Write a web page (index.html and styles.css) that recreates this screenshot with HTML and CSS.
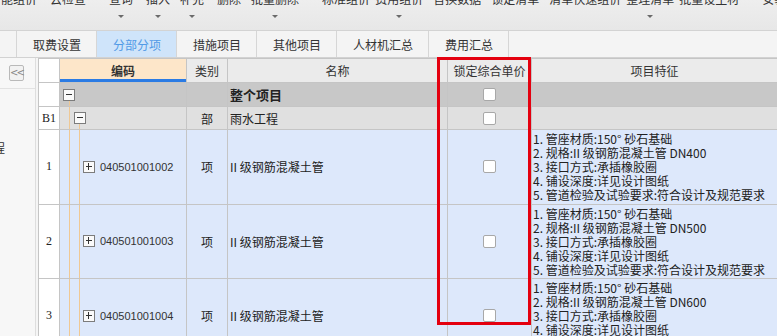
FILE: index.html
```html
<!DOCTYPE html>
<html lang="zh-CN">
  <head>
    <meta charset="UTF-8" />
    <meta name="viewport" content="width=device-width, initial-scale=1.0" />
    <title>分部分项</title>
    <link rel="stylesheet" href="styles.css">
  </head>
  <body>
    <div class="app">
      <div class="toolbar">
        <div class="tool"><span>智能组价</span></div>
        <div class="tool gap-m"><span>云检查</span></div>
        <div class="tool gap-l"><span>查询</span><i class="drop"></i></div>
        <div class="tool gap-m"><span>插入</span><i class="drop"></i></div>
        <div class="tool"><span>补充</span><i class="drop"></i></div>
        <div class="tool gap-m"><span>删除</span></div>
        <div class="tool"><span>批量删除</span><i class="drop"></i></div>
        <div class="tool gap-l"><span>标准组价</span></div>
        <div class="tool gap-s"><span>费用组价</span><i class="drop"></i></div>
        <div class="tool"><span>替换数据</span></div>
        <div class="tool"><span>锁定清单</span></div>
        <div class="tool"><span>清单快速组价</span></div>
        <div class="tool gap-s"><span>整理清单</span><i class="drop"></i></div>
        <div class="tool gap-s"><span>批量设主材</span></div>
        <div class="tool gap-l"><span>安装费用</span></div>
      </div>

      <nav class="tabs">
        <div class="tab">取费设置</div>
        <div class="tab active">分部分项</div>
        <div class="tab">措施项目</div>
        <div class="tab">其他项目</div>
        <div class="tab">人材机汇总</div>
        <div class="tab">费用汇总</div>
      </nav>

      <div class="workspace">
        <aside class="side">
          <div class="side-head"><span class="collapse">&lt;&lt;</span></div>
          <div class="side-tree"><span class="node">雨水工程</span></div>
        </aside>

        <div class="grid-wrap">
          <table class="grid">
            <colgroup>
              <col class="c-num" />
              <col class="c-code" />
              <col class="c-type" />
              <col class="c-name" />
              <col class="c-lock" />
              <col class="c-feat" />
            </colgroup>
            <thead>
              <tr>
                <th class="num"></th>
                <th class="code-head">编码</th>
                <th>类别</th>
                <th>名称</th>
                <th>锁定综合单价</th>
                <th>项目特征</th>
              </tr>
            </thead>
            <tbody>
              <tr class="row-root">
                <td class="num"></td>
                <td class="code"><div class="code-cell lv0"><span class="fold"></span></div></td>
                <td class="type"></td>
                <td class="name"><b>整个项目</b></td>
                <td><span class="check"></span></td>
                <td class="feat"></td>
              </tr>
              <tr class="row-part">
                <td class="num">B1</td>
                <td class="code"><div class="code-cell lv1"><span class="fold"></span></div></td>
                <td class="type">部</td>
                <td class="name">雨水工程</td>
                <td><span class="check"></span></td>
                <td class="feat"></td>
              </tr>
              <tr class="row-item">
                <td class="num">1</td>
                <td class="code"><div class="code-cell lv2"><span class="fold plus"></span><span class="code-no">040501001002</span></div></td>
                <td class="type">项</td>
                <td class="name">II 级钢筋混凝土管</td>
                <td><span class="check"></span></td>
                <td class="feat">
                  <div>1. 管座材质:150° 砂石基础</div>
                  <div>2. 规格:II 级钢筋混凝土管 DN400</div>
                  <div>3. 接口方式:承插橡胶圈</div>
                  <div>4. 铺设深度:详见设计图纸</div>
                  <div>5. 管道检验及试验要求:符合设计及规范要求</div>
                </td>
              </tr>
              <tr class="row-item">
                <td class="num">2</td>
                <td class="code"><div class="code-cell lv2"><span class="fold plus"></span><span class="code-no">040501001003</span></div></td>
                <td class="type">项</td>
                <td class="name">II 级钢筋混凝土管</td>
                <td><span class="check"></span></td>
                <td class="feat">
                  <div>1. 管座材质:150° 砂石基础</div>
                  <div>2. 规格:II 级钢筋混凝土管 DN500</div>
                  <div>3. 接口方式:承插橡胶圈</div>
                  <div>4. 铺设深度:详见设计图纸</div>
                  <div>5. 管道检验及试验要求:符合设计及规范要求</div>
                </td>
              </tr>
              <tr class="row-item">
                <td class="num">3</td>
                <td class="code"><div class="code-cell lv2"><span class="fold plus"></span><span class="code-no">040501001004</span></div></td>
                <td class="type">项</td>
                <td class="name">II 级钢筋混凝土管</td>
                <td><span class="check"></span></td>
                <td class="feat">
                  <div>1. 管座材质:150° 砂石基础</div>
                  <div>2. 规格:II 级钢筋混凝土管 DN600</div>
                  <div>3. 接口方式:承插橡胶圈</div>
                  <div>4. 铺设深度:详见设计图纸</div>
                  <div>5. 管道检验及试验要求:符合设计及规范要求</div>
                </td>
              </tr>
            </tbody>
          </table>
        </div>
      </div>

      <!-- annotation box drawn over the grid -->
      <div class="mark"></div>
    </div>
  </body>
</html>
```

FILE: styles.css
```css
* {
  box-sizing: border-box;
}

body {
  margin: 0;
  width: 777px;
  height: 336px;
  overflow: hidden;
  background: #f5f5f5;
  font-family: "Noto Sans CJK SC", "Liberation Sans", sans-serif;
  font-size: 12px;
  color: #222;
}

.app {
  position: relative;
  height: 336px;
  display: flex;
  flex-direction: column;
}

/* toolbar */
.toolbar {
  height: 31px;
  flex: none;
  display: flex;
  align-items: flex-start;
  background: linear-gradient(#eeeeee, #e7e7e7);
  border-bottom: 1px solid #d3d3d3;
  color: #333;
  overflow: hidden;
}

.tool {
  display: flex;
  flex-direction: column;
  align-items: center;
  margin-left: 10px;
  margin-top: -8px;
  line-height: 14px;
  white-space: nowrap;
}

.tool:first-child {
  margin-left: -11px;
}

.tool.gap-s {
  margin-left: 5px;
}

.tool.gap-m {
  margin-left: 13px;
}

.tool.gap-l {
  margin-left: 23px;
}

.drop {
  width: 0;
  height: 0;
  margin-top: 9px;
  border-left: 3px solid transparent;
  border-right: 3px solid transparent;
  border-top: 3px solid #6a6a6a;
}

/* tabs */
.tabs {
  height: 27px;
  flex: none;
  display: flex;
  padding-left: 16px;
  background: #f4f4f4;
  border-bottom: 1px solid #d2d2d2;
}

.tab {
  display: flex;
  align-items: center;
  padding: 0 15px 0 16px;
  border-right: 1px solid #d6d6d6;
  color: #333;
}

.tab:first-child {
  border-left: 1px solid #d6d6d6;
}

.tab.active {
  background: #cfe4fa;
  color: #519ae6;
}

/* body */
.workspace {
  flex: 1;
  min-height: 0;
  display: flex;
}

.side {
  width: 36px;
  flex: none;
  margin-right: 2px;
  background: #f7f7f7;
  border-right: 1px solid #dedede;
  overflow: hidden;
}

.side-head {
  height: 31px;
  padding: 7px 0 0 9px;
  border-bottom: 1px solid #e2e2e2;
}

.collapse {
  display: block;
  width: 15px;
  height: 16px;
  border: 1px solid #b9b9b9;
  border-radius: 2px;
  background: #f2f2f2;
  color: #888;
  font-family: "DejaVu Sans", sans-serif;
  font-size: 10px;
  line-height: 14px;
  text-align: center;
  letter-spacing: -2px;
}

.side-tree {
  padding-top: 51px;
  line-height: 16px;
  white-space: nowrap;
}

.node {
  margin-left: -43px;
  color: #333;
}

.grid-wrap {
  flex: 1;
  overflow: hidden;
  background: #fff;
}

/* grid */
.grid {
  width: 739px;
  border-collapse: collapse;
  table-layout: fixed;
}

.c-num { width: 21px; }
.c-code { width: 127px; }
.c-type { width: 41px; }
.c-name { width: 220px; }
.c-lock { width: 84px; }
.c-feat { width: 246px; }

.grid th,
.grid td {
  padding: 0;
  border: 1px solid #c5c5c5;
  overflow: hidden;
  white-space: nowrap;
}

.grid th {
  height: 24px;
  background: #ebebeb;
  font-weight: normal;
  color: #333;
}

.grid th.code-head {
  background: #fde6c9;
  font-weight: bold;
  box-shadow: inset 0 -3px #2a7be4;
}

.grid td {
  text-align: center;
}

.grid td.num,
.grid th.num {
  background: #fff;
  font-family: "Liberation Serif", serif;
  font-size: 12px;
}

.row-root td {
  height: 24px;
  background: #c8c8c8;
}

.row-part td {
  height: 23px;
  background: #e0e0e0;
}

.row-item td {
  height: 74.5px;
  background: #dde8fb;
}

.row-root td.code {
  background: linear-gradient(#efc894, #efc894) 9px 100% / 1px 6px no-repeat, #c8c8c8;
}

.row-part td.code {
  background:
    linear-gradient(#efc894, #efc894) 9px 0 / 1px 100% no-repeat,
    linear-gradient(#efc894, #efc894) 19px 100% / 1px 6px no-repeat,
    #e0e0e0;
}

.row-item td.code {
  background:
    linear-gradient(#efc894, #efc894) 9px 0 / 1px 100% no-repeat,
    linear-gradient(#efc894, #efc894) 19px 0 / 1px 100% no-repeat,
    #dde8fb;
}

.code-cell {
  display: flex;
  align-items: center;
  gap: 5px;
}

.code-cell.lv0 { padding-left: 3px; }
.code-cell.lv1 { padding-left: 14px; }
.code-cell.lv2 { padding-left: 23px; }

.code-no {
  font-family: "Liberation Sans", sans-serif;
  font-size: 11px;
  color: #333;
}

.fold {
  position: relative;
  display: inline-block;
  width: 12px;
  height: 12px;
  border: 1px solid #7c7c7c;
  background: #fafafa;
}

.fold::before {
  content: "";
  position: absolute;
  left: 2px;
  right: 2px;
  top: 4px;
  height: 1px;
  background: #333;
}

.fold.plus::after {
  content: "";
  position: absolute;
  top: 1px;
  bottom: 2px;
  left: 4px;
  width: 1px;
  background: #333;
}

.grid td.name {
  text-align: left;
  padding-left: 2px;
}

.name b {
  font-size: 13px;
}

.check {
  display: block;
  width: 13px;
  height: 13px;
  margin: 0 auto;
  background: #fff;
  border: 1px solid #a8a8a8;
  border-radius: 2px;
}

.grid td.feat {
  vertical-align: top;
  text-align: left;
  padding: 2px 0 0 1px;
  line-height: 14px;
}

/* red annotation frame */
.mark {
  position: absolute;
  left: 437px;
  top: 57px;
  width: 94px;
  height: 268px;
  border: 3px solid #e4000f;
  pointer-events: none;
}
```
